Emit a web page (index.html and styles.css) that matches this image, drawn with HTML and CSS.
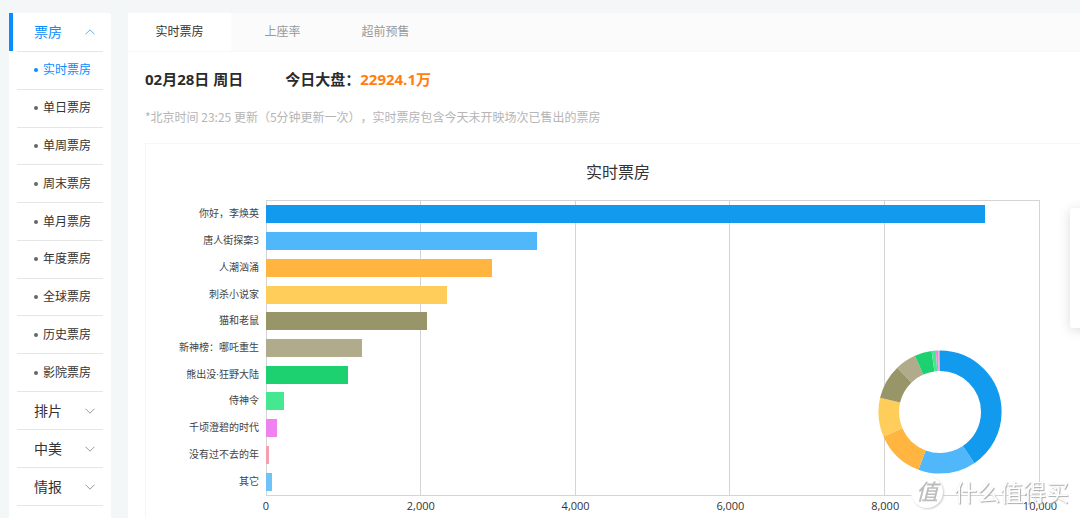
FILE: index.html
```html
<!DOCTYPE html>
<html lang="zh-CN">
<head>
<meta charset="utf-8">
<meta name="viewport" content="width=device-width, initial-scale=1">
<title>实时票房</title>
<link rel="stylesheet" href="styles.css">
</head>
<body>
<div class="layout">
  <nav class="sidebar">
    <button class="group group-active" type="button">票房<svg class="chevron" viewBox="0 0 10 6"><path d="M0.5 5.3 5 0.8 9.5 5.3"/></svg></button>
    <ul class="submenu">
      <li><a class="current" href="#">实时票房</a></li>
      <li><a href="#">单日票房</a></li>
      <li><a href="#">单周票房</a></li>
      <li><a href="#">周末票房</a></li>
      <li><a href="#">单月票房</a></li>
      <li><a href="#">年度票房</a></li>
      <li><a href="#">全球票房</a></li>
      <li><a href="#">历史票房</a></li>
      <li><a href="#">影院票房</a></li>
    </ul>
    <button class="group" type="button">排片<svg class="chevron" viewBox="0 0 10 6"><path d="M0.5 0.7 5 5.2 9.5 0.7"/></svg></button>
    <button class="group" type="button">中美<svg class="chevron" viewBox="0 0 10 6"><path d="M0.5 0.7 5 5.2 9.5 0.7"/></svg></button>
    <button class="group" type="button">情报<svg class="chevron" viewBox="0 0 10 6"><path d="M0.5 0.7 5 5.2 9.5 0.7"/></svg></button>
  </nav>

  <main class="content">
    <div class="tabs">
      <button class="tab tab-active" type="button">实时票房</button>
      <button class="tab" type="button">上座率</button>
      <button class="tab" type="button">超前预售</button>
    </div>
    <div class="body">
      <h1 class="summary"><span>02月28日 周日</span><span>今日大盘：<span class="amount">22924.1万</span></span></h1>
      <p class="note">*北京时间 23:25 更新（5分钟更新一次），实时票房包含今天未开映场次已售出的票房</p>
      <section class="chart">
        <h2 class="chart-title">实时票房</h2>
        <div class="chart-area">
          <ul class="labels">
            <li>你好，李焕英</li>
            <li>唐人街探案3</li>
            <li>人潮汹涌</li>
            <li>刺杀小说家</li>
            <li>猫和老鼠</li>
            <li>新神榜：哪吒重生</li>
            <li>熊出没·狂野大陆</li>
            <li>侍神令</li>
            <li>千顷澄碧的时代</li>
            <li>没有过不去的年</li>
            <li>其它</li>
          </ul>
          <div class="plot">
            <div class="gridlines"><i></i><i></i><i></i><i></i><i></i></div>
            <div class="bars">
              <div class="bar c1" style="width:93%"></div>
              <div class="bar c2" style="width:35.1%"></div>
              <div class="bar c3" style="width:29.2%"></div>
              <div class="bar c4" style="width:23.4%"></div>
              <div class="bar c5" style="width:20.8%"></div>
              <div class="bar c6" style="width:12.4%"></div>
              <div class="bar c7" style="width:10.6%"></div>
              <div class="bar c8" style="width:2.3%"></div>
              <div class="bar c9" style="width:1.4%"></div>
              <div class="bar c10" style="width:0.4%"></div>
              <div class="bar c11" style="width:0.8%"></div>
            </div>
            <svg class="donut" viewBox="0 0 124 124" role="img" aria-label="票房占比">
              <g transform="rotate(-90 62 62)">
                <circle class="s1" pathLength="100" cx="62" cy="62" r="51.3" stroke-dasharray="40.6 100"/>
                <circle class="s2" pathLength="100" cx="62" cy="62" r="51.3" stroke-dasharray="15.1 100" stroke-dashoffset="-40.6"/>
                <circle class="s3" pathLength="100" cx="62" cy="62" r="51.3" stroke-dasharray="12.8 100" stroke-dashoffset="-55.7"/>
                <circle class="s4" pathLength="100" cx="62" cy="62" r="51.3" stroke-dasharray="10.2 100" stroke-dashoffset="-68.5"/>
                <circle class="s5" pathLength="100" cx="62" cy="62" r="51.3" stroke-dasharray="9.1 100" stroke-dashoffset="-78.7"/>
                <circle class="s6" pathLength="100" cx="62" cy="62" r="51.3" stroke-dasharray="5.5 100" stroke-dashoffset="-87.8"/>
                <circle class="s7" pathLength="100" cx="62" cy="62" r="51.3" stroke-dasharray="4.5 100" stroke-dashoffset="-93.3"/>
                <circle class="s8" pathLength="100" cx="62" cy="62" r="51.3" stroke-dasharray="1.1 100" stroke-dashoffset="-97.8"/>
                <circle class="s9" pathLength="100" cx="62" cy="62" r="51.3" stroke-dasharray="0.6 100" stroke-dashoffset="-98.9"/>
                <circle class="s10" pathLength="100" cx="62" cy="62" r="51.3" stroke-dasharray="0.2 100" stroke-dashoffset="-99.5"/>
                <circle class="s11" pathLength="100" cx="62" cy="62" r="51.3" stroke-dasharray="0.3 100" stroke-dashoffset="-99.7"/>
              </g>
            </svg>
          </div>
          <div class="axis"><span>0</span><span>2,000</span><span>4,000</span><span>6,000</span><span>8,000</span><span>10,000</span></div>
        </div>
      </section>
    </div>
  </main>
</div>
<aside class="side-panel"></aside>
<div class="watermark"><span class="seal">值</span><span>什么值得买</span></div>
</body>
</html>
```
FILE: styles.css
```css
* { box-sizing: border-box; }
body {
  margin: 0;
  min-height: 100vh;
  overflow: hidden;
  background: #f3f7f8;
  color: #333;
  font: 12px/18px "Open Sans", "Noto Sans CJK SC", sans-serif;
}
ul { list-style: none; margin: 0; padding: 0; }
button { border: 0; background: none; font: inherit; color: inherit; cursor: pointer; }
a { color: inherit; text-decoration: none; }

.layout { display: flex; gap: 17px; min-height: 100vh; padding: 13px 0 0 9px; }

/* navigation */
.sidebar { flex: 0 0 102px; background: #fff; border-radius: 3px; }
.group {
  position: relative;
  display: flex;
  align-items: center;
  justify-content: space-between;
  width: 86px;
  height: 38px;
  margin: 0 8px;
  padding: 0 8px 0 17px;
  border-bottom: 1px solid #e6e6e6;
  font-size: 14px;
}
.group-active { height: 39px; color: #0a8cff; }
.group-active::before {
  content: "";
  position: absolute;
  left: -8px;
  top: 0;
  width: 4px;
  height: 38px;
  background: #0a8cff;
}
.chevron { width: 10px; height: 6px; fill: none; stroke: #999; }
.group-active .chevron { stroke: #55b3f5; }
.submenu { display: flex; flex-direction: column; height: 340px; margin: 0 8px; }
.submenu li { flex: 1; border-bottom: 1px solid #e6e6e6; }
.submenu a { display: flex; align-items: center; gap: 5px; height: 100%; padding-left: 17px; }
.submenu a::before { content: ""; width: 4px; height: 4px; border-radius: 50%; background: #666; }
.submenu .current { color: #0a8cff; }
.submenu .current::before { background: #0a8cff; }

/* content runs past the right edge of the window */
.content { flex: 1; margin-right: -28px; background: #fff; border-radius: 3px 0 0 0; }
.tabs { display: flex; background: #fbfbfb; border-bottom: 1px solid #f8f8f8; }
.tab { width: 103px; height: 38px; padding: 0; color: #999; }
.tab-active { background: #fff; color: #333; border-radius: 3px 0 0 0; }
.body { padding: 15px 17px 0; }
.summary {
  display: flex;
  gap: 42px;
  margin: 0;
  font-size: 15px;
  line-height: 24px;
  font-weight: 700;
  color: #2b2b2b;
}
.amount { color: #ff7e0e; }
.note {
  margin: 17px 0;
  font-family: "Noto Sans CJK SC", sans-serif;
  text-spacing-trim: space-all;
  color: #b5b5b5;
}

/* chart */
.chart { border: 1px solid #f6f6f6; padding: 16px 50px 20px 0; }
.chart-title { margin: 0 -50px 16px 0; text-align: center; font-size: 16px; line-height: 24px; font-weight: 400; }
.chart-area { display: grid; grid-template-columns: 113px 1fr; grid-template-rows: 296px auto; column-gap: 7px; }
.labels, .bars { display: grid; grid-template-rows: repeat(11, 1fr); align-items: center; }
.labels { padding-bottom: 2px; font-size: 10px; line-height: 16px; text-align: right; color: #444; }
.plot { position: relative; display: grid; border: 1px solid #d4d4d4; }
.gridlines, .bars { grid-area: 1 / 1; }
.gridlines { display: grid; grid-template-columns: repeat(5, 1fr); }
.gridlines i { border-right: 1px solid #d4d4d4; }
.gridlines i:last-child { border: 0; }
.bars { position: relative; margin-left: -1px; }
.bar { height: 18px; }
.axis {
  grid-column: 2;
  display: grid;
  grid-template-columns: repeat(6, 1fr);
  margin: 2px -10% 0;
  font-size: 11px;
  line-height: 16px;
  text-align: center;
}
.donut { position: absolute; right: 37px; bottom: 21px; width: 124px; height: 124px; fill: none; stroke-width: 20.6; }

.c1 { background: #129aef; }   .s1 { stroke: #129aef; }
.c2 { background: #50b7fb; }   .s2 { stroke: #50b7fb; }
.c3 { background: #ffb540; }   .s3 { stroke: #ffb540; }
.c4 { background: #ffcd5a; }   .s4 { stroke: #ffcd5a; }
.c5 { background: #989569; }   .s5 { stroke: #989569; }
.c6 { background: #b0ac8b; }   .s6 { stroke: #b0ac8b; }
.c7 { background: #1dd170; }   .s7 { stroke: #1dd170; }
.c8 { background: #45e891; }   .s8 { stroke: #45e891; }
.c9 { background: #ef82ee; }   .s9 { stroke: #ef82ee; }
.c10 { background: #f4a0ae; }  .s10 { stroke: #f4a0ae; }
.c11 { background: #70c3f7; }  .s11 { stroke: #70c3f7; }

/* overlays */
.side-panel {
  position: fixed;
  right: -40px;
  top: 208px;
  width: 50px;
  height: 120px;
  border-radius: 3px;
  background: #fff;
  box-shadow: 0 2px 12px rgba(60, 80, 90, 0.2);
}
.watermark {
  position: fixed;
  right: 11px;
  bottom: 10px;
  display: flex;
  align-items: center;
  gap: 11px;
  color: #fff;
  font-size: 23px;
  line-height: 32px;
  text-shadow: 1px 1px 1px #aaa, 0 0 1px #ddd;
}
.seal {
  width: 32px;
  height: 32px;
  border-radius: 50%;
  background: #fff;
  box-shadow: 1px 1px 2px #ccc;
  color: #bdbdbd;
  text-align: center;
  font-weight: 500;
  font-style: italic;
  font-size: 22px;
  line-height: 31px;
  text-shadow: none;
}
```
